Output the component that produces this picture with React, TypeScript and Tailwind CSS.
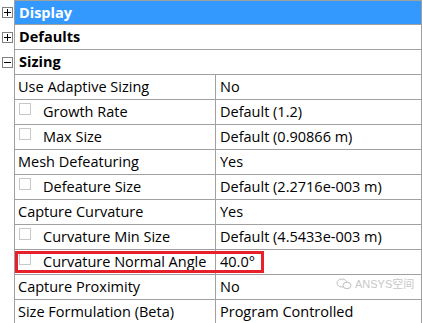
import React from "react";

type Row =
  | { kind: "group"; label: string; open: boolean; selected?: boolean }
  | { kind: "prop"; label: string; value: string; check?: boolean; highlight?: boolean };

const rows: Row[] = [
  { kind: "group", label: "Display", open: false, selected: true },
  { kind: "group", label: "Defaults", open: false },
  { kind: "group", label: "Sizing", open: true },
  { kind: "prop", label: "Use Adaptive Sizing", value: "No" },
  { kind: "prop", label: "Growth Rate", value: "Default (1.2)", check: true },
  { kind: "prop", label: "Max Size", value: "Default (0.90866 m)", check: true },
  { kind: "prop", label: "Mesh Defeaturing", value: "Yes" },
  { kind: "prop", label: "Defeature Size", value: "Default (2.2716e-003 m)", check: true },
  { kind: "prop", label: "Capture Curvature", value: "Yes" },
  { kind: "prop", label: "Curvature Min Size", value: "Default (4.5433e-003 m)", check: true },
  { kind: "prop", label: "Curvature Normal Angle", value: "40.0°", check: true, highlight: true },
  { kind: "prop", label: "Capture Proximity", value: "No" },
  { kind: "prop", label: "Size Formulation (Beta)", value: "Program Controlled" },
];

const Expander = ({ open }: { open: boolean }) => (
  <div className="relative w-[11px] h-[11px] border border-[#808080] bg-white">
    <div className="absolute left-[1px] right-[1px] top-[4px] h-px bg-black" />
    {!open && <div className="absolute top-[1px] bottom-[1px] left-[4px] w-px bg-black" />}
  </div>
);

const Checkbox = () => (
  <div className="w-[12px] h-[12px] border border-[#c8c8c8] bg-white shrink-0 mt-[2px]" />
);

export default function App() {
  return (
    <div
      className="relative w-[423px] h-[323px] overflow-hidden bg-white text-black text-[14.5px]"
      style={{ fontFamily: '"Open Sans", "Noto Sans", sans-serif' }}
    >
      <div className="flex flex-col w-[422px]">
        {rows.map((row, i) => (
          <div key={i} className="flex h-[25px] shrink-0">
            <div className="w-[14px] flex items-center justify-start pl-[2px]">
              {row.kind === "group" && <Expander open={row.open} />}
            </div>
            <div
              className={`flex-1 flex border-l border-r border-b border-[#a0a0a0] ${i === 0 ? "border-t" : ""}`}
            >
              {row.kind === "group" ? (
                <div
                  className={`flex-1 flex items-center pl-[4px] font-bold ${row.selected ? "bg-[#3399ff] text-white" : ""}`}
                >
                  {row.label}
                </div>
              ) : (
                <>
                  <div className="relative w-[201px] flex items-center border-r border-[#a0a0a0] pl-[3px]">
                    {row.check ? (
                      <div className="flex items-start h-full pt-[1px] pl-[1px]">
                        <Checkbox />
                        <span className="ml-[12px] leading-[22px]">{row.label}</span>
                      </div>
                    ) : (
                      <span>{row.label}</span>
                    )}
                  </div>
                  <div className="relative flex-1 flex items-center pl-[4px]">
                    <span>{row.value}</span>
                  </div>
                </>
              )}
            </div>
          </div>
        ))}
      </div>
      {/* red highlight box */}
      <div className="absolute left-[15px] top-[251px] w-[249px] h-[22px] border-[3px] border-[#e8202a]" />
      {/* watermark */}
      <div className="absolute left-[336px] top-[276px] flex items-center gap-[3px] text-[#c8c8c8] text-[11px]">
        <svg width="16" height="12" viewBox="0 0 16 12" fill="none" stroke="#c0c0c0" strokeWidth="1">
          <ellipse cx="6" cy="5" rx="5" ry="4" />
          <ellipse cx="11" cy="7.5" rx="4" ry="3.2" fill="white" />
        </svg>
        <span style={{ fontFamily: '"Liberation Sans", "Noto Sans CJK SC", sans-serif' }}>ANSYS空间</span>
      </div>
    </div>
  );
}
